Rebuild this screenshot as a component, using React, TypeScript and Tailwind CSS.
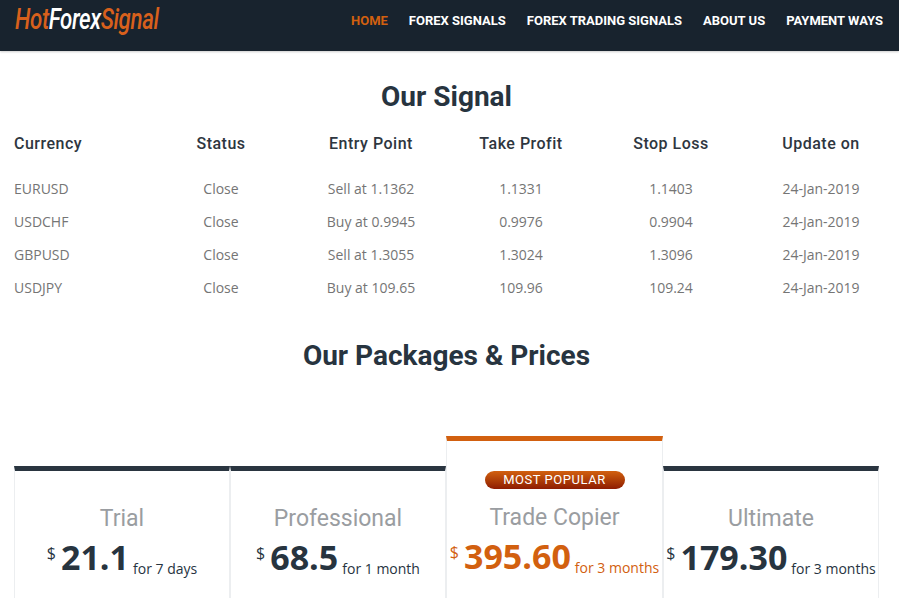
const nav = ["HOME", "FOREX SIGNALS", "FOREX TRADING SIGNALS", "ABOUT US", "PAYMENT WAYS"];
const rows = [
  ["EURUSD", "Close", "Sell at 1.1362", "1.1331", "1.1403", "24-Jan-2019"],
  ["USDCHF", "Close", "Buy at 0.9945", "0.9976", "0.9904", "24-Jan-2019"],
  ["GBPUSD", "Close", "Sell at 1.3055", "1.3024", "1.3096", "24-Jan-2019"],
  ["USDJPY", "Close", "Buy at 109.65", "109.96", "109.24", "24-Jan-2019"],
];
const heads = ["Currency", "Status", "Entry Point", "Take Profit", "Stop Loss", "Update on"];
const plans = [
  { name: "Trial", price: "21.1", term: "for 7 days" },
  { name: "Professional", price: "68.5", term: "for 1 month" },
  { name: "Trade Copier", price: "395.60", term: "for 3 months", hot: true },
  { name: "Ultimate", price: "179.30", term: "for 3 months" },
];

export default function App() {
  return (
    <div className="h-[598px] w-[899px] overflow-hidden bg-white font-['Roboto',sans-serif] text-[#27343f]">
      <header className="flex h-[51px] items-start justify-between bg-[#18232e] pl-[15px] pr-[16px] shadow-[0_1px_2px_rgba(0,0,0,0.2)]">
        <div className="mt-[2px] origin-left scale-x-[0.77] whitespace-nowrap font-['Roboto',sans-serif] text-[29px] leading-[34px] font-medium italic tracking-[-0.5px] text-[#d8601c]">
          Hot<span className="text-white">Forex</span>Signal
        </div>
        <nav className="mt-[12px] flex gap-[21px]">
          {nav.map((n, i) => (
            <span key={n} className={`text-[13px] leading-[17px] font-bold ${i === 0 ? "text-[#d2600f]" : "text-white"}`}>{n}</span>
          ))}
        </nav>
      </header>

      <h2 className="mt-[27px] pr-[6px] text-center text-[28px] leading-[38px] font-bold">Our Signal</h2>

      <div className="mt-[16px] pl-[14px]">
        <div className="grid grid-cols-[132px_repeat(5,150px)] text-[16px] leading-[24px] font-medium tracking-[0.5px] text-[#2e3640]">
          {heads.map((h, i) => (
            <div key={h} className={i === 0 ? "" : "text-center"}>{h}</div>
          ))}
        </div>
        <div className="mt-[16px] flex flex-col">
          {rows.map((r) => (
            <div key={r[0]} className="grid h-[33px] grid-cols-[132px_repeat(5,150px)] font-['Open_Sans',sans-serif] text-[14px] leading-[33px] text-[#757575]">
              {r.map((c, i) => (
                <div key={i} className={i === 0 ? "" : "text-center"}>{c}</div>
              ))}
            </div>
          ))}
        </div>
      </div>

      <h2 className="mt-[33px] pr-[6px] text-center text-[28px] leading-[38px] font-bold">Our Packages &amp; Prices</h2>

      <div className="mt-[61px] flex items-end pl-[14px]">
        {plans.map((p) => (
          <div
            key={p.name}
            className={`flex flex-col items-center border-x border-[#eceef0] bg-white ${p.hot ? "h-[162px] w-[217px] border-t-[5px] border-t-[#d2600f] pt-[30px]" : "h-[132px] w-[216px] border-t-[5px] border-t-[#2a3540] pt-[34px]"}`}
          >
            {p.hot && (
              <div className="mb-[15px] h-[18px] w-[140px] rounded-full bg-gradient-to-b from-[#d2600f] to-[#8e1b02] text-center text-[13px] leading-[18px] tracking-[0.55px] text-white">
                MOST POPULAR
              </div>
            )}
            <div className="text-[23px] leading-[28px] text-[#9a9da1]">{p.name}</div>
            <div className={`mt-[1px] flex items-center whitespace-nowrap font-['Open_Sans',sans-serif] ${p.hot ? "text-[#d2600f]" : "text-[#27343f]"}`}>
              <span className="relative top-[-4px] text-[16px]">$</span>
              <span className="ml-[5px] text-[34px] leading-[46px] font-bold">{p.price}</span>
              <span className="relative top-[11px] ml-[4px] text-[14px]">{p.term}</span>
            </div>
          </div>
        ))}
      </div>
    </div>
  );
}
